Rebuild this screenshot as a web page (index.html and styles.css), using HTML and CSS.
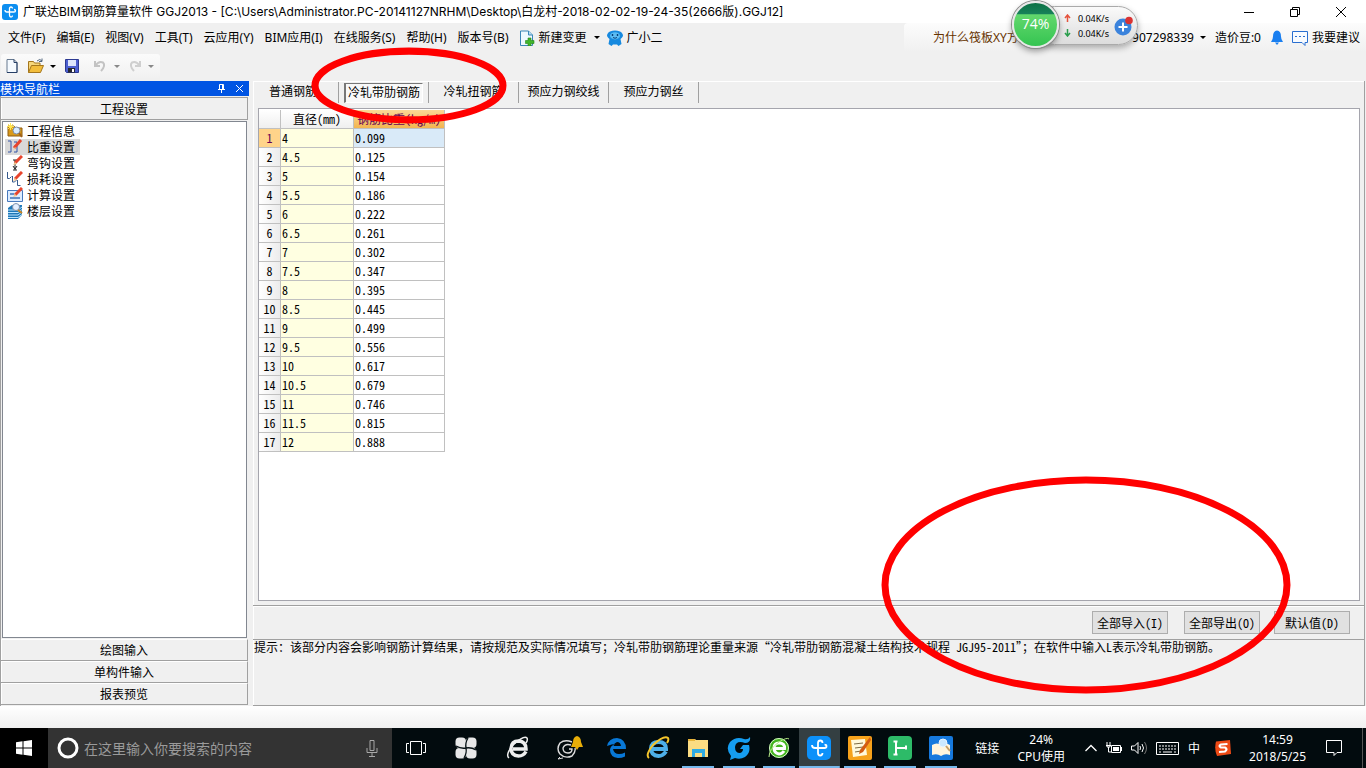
FILE: index.html
```html
<!DOCTYPE html>
<html lang="zh-CN">
<head>
<meta charset="utf-8">
<title>广联达BIM钢筋算量软件 GGJ2013</title>
<link rel="stylesheet" href="styles.css">
</head>
<body>
<div class="window">
  <header class="titlebar">
    <svg class="app-icon" viewBox="0 0 16 16"><rect width="16" height="16" rx="3" fill="#0c8ef0"/><path d="M10.500 4.500q0-1.500-1.500-1.500T7.500 4.500v6.500q0 2 1.500 2t1.500-1.500M3 6q0 2 2 2h7q1.500 0 1.500-1.200T12 5.500" fill="none" stroke="#fff" stroke-width="1.300"/></svg>
    <h1 class="title">广联达BIM钢筋算量软件 GGJ2013 - [C:\Users\Administrator.PC-20141127NRHM\Desktop\白龙村-2018-02-02-19-24-35(2666版).GGJ12]</h1>
    <div class="window-buttons">
      <button aria-label="最小化"><svg viewBox="0 0 12 12"><path d="M1 6.500h10" stroke="#000" fill="none"/></svg></button>
      <button aria-label="还原"><svg viewBox="0 0 12 12"><path d="M1.500 3.500h7v7h-7zM3.500 3.500v-2h7v7h-2" stroke="#000" fill="none"/></svg></button>
      <button aria-label="关闭"><svg viewBox="0 0 12 12"><path d="M1 1l10 10M11 1L1 11" stroke="#000" fill="none"/></svg></button>
    </div>
  </header>

  <div class="menubar">
    <nav class="menus">
      <button>文件(F)</button><button>编辑(E)</button><button>视图(V)</button><button>工具(T)</button><button>云应用(Y)</button><button>BIM应用(I)</button><button>在线服务(S)</button><button>帮助(H)</button><button>版本号(B)</button>
    </nav>
    <button class="menu-extra">
      <svg class="i16" viewBox="0 0 16 16"><path d="M1.500 1h8l4 4v10.500h-12z" fill="#eef8ff" stroke="#3b86b8"/><path d="M9.500 1v4h4" fill="#b8dcf2" stroke="#3b86b8"/><path d="M9 8h3v2.500h3v3h-3V16H9v-2.500H6.500v-3H9z" fill="#42b52b" stroke="#24831a" stroke-width=".6"/></svg>
      <span>新建变更</span><i class="caret"></i>
    </button>
    <button class="menu-extra">
      <svg class="i16" viewBox="0 0 16 16"><path d="M3 1.500Q8-.5 13 1.500q3 1.500 3 4.500-1 2-2.500 3l1 5-3 2-1.500-1.500H6L4.500 16l-3-2 1-5Q1 8 0 6q0-3 3-4.500" fill="#1689df"/><ellipse cx="8" cy="5.800" rx="5" ry="3.600" fill="#5cbcf3"/><path d="M5.500 4v2M10.500 4v2" stroke="#08417c" stroke-width="1.400"/><path d="M6 7.500q2 1.500 4 0" stroke="#08417c" fill="none"/></svg>
      <span>广小二</span>
    </button>
    <div class="account">
      <a class="question" href="#">为什么筏板XY方向</a>
      <button class="acct-id"><span>907298339</span><i class="caret"></i></button>
      <span class="beans">造价豆:0</span>
      <svg class="bell" viewBox="0 0 12 15"><path d="M6 .5q4 .5 4 6 0 3 2 5.500H0Q2 9.500 2 6.500 2 1 6 .5" fill="#1a7ff0"/><path d="M4 12.500h4L6 15z" fill="#1a7ff0"/></svg>
      <button class="suggest"><svg class="i16" viewBox="0 0 16 16"><path d="M.5 1.500h15v11H13v3l-3-3H.5z" fill="#f8fbff" stroke="#2a6fd0"/><path d="M3 6.500h2m2 0h2m2 0h2" stroke="#2a6fd0"/></svg><span>我要建议</span></button>
    </div>
  </div>

  <div class="toolrow">
    <div class="toolbar">
      <button aria-label="新建"><svg class="i16" viewBox="0 0 16 16"><path d="M3 1.500h7l3 3v10H3z" fill="#f5faff" stroke="#66788f"/><path d="M10 1.500v3h3v10H3" fill="none" stroke="#263e66"/></svg></button>
      <button class="split" aria-label="打开"><svg class="i16" viewBox="0 0 16 16"><path d="M.5 14.500v-11h5l1 1.500H12v3" fill="#f6d77c" stroke="#a4761d"/><path d="M.5 14.500l3-7H15.500l-3 7z" fill="#f2bd3c" stroke="#a4761d"/><path d="M9 3q3-3 5 0m0-2.500V3.500h-3" fill="none" stroke="#52677f"/></svg><i class="caret"></i></button>
      <button aria-label="保存"><svg class="i16" viewBox="0 0 16 16"><path d="M1.500 1.500h13v13h-12l-1-1z" fill="#4c5fd0" stroke="#2c3991"/><path d="M4 2h8v6H4z" fill="#dde5fb"/><path d="M4 10h7v4.500H4z" fill="#25272f"/><path d="M8 11h2v3H8z" fill="#fff"/></svg></button>
      <i class="divider"></i>
      <button class="split off" aria-label="撤销" disabled><svg class="i16" viewBox="0 0 16 16"><path d="M2 3v5h5M2.500 7.500Q6 2.500 10 4.500q3 3-2 8.500" fill="none" stroke="#c3c3c3" stroke-width="2"/></svg><i class="caret"></i></button>
      <button class="split off" aria-label="重做" disabled><svg class="i16" viewBox="0 0 16 16"><path d="M13 3v5H8M12.500 7.500Q9 2.500 5 4.500q-3 3 2 8.500" fill="none" stroke="#cfcfcf" stroke-width="2"/></svg><i class="caret"></i></button>
    </div>
  </div>

  <main class="workspace">
    <aside class="nav-panel">
      <div class="nav-title"><span>模块导航栏</span>
        <button aria-label="固定"><svg viewBox="0 0 9 9"><path d="M2.500 5V.5h4V5M1 5.500h7M4.500 6v3M5.500 1v4" fill="none" stroke="#fff"/></svg></button>
        <button aria-label="关闭"><svg viewBox="0 0 9 9"><path d="M1 1l7 7M8 1L1 8" fill="none" stroke="#fff"/></svg></button>
      </div>
      <button class="section">工程设置</button>
      <ul class="tree">
        <li><button><svg class="i16" viewBox="0 0 16 16"><path d="M1 3h6l1 2h7v8H1z" fill="#d99a1c" stroke="#8f5d10"/><circle cx="9.500" cy="7.500" r="3.500" fill="#d8ecff" stroke="#7b8aa0"/><path d="M12 10l3 4" stroke="#a0631c" stroke-width="2"/><path d="M3.500 0v7M0 3.500h7M1 1l5 5M6 1L1 6" stroke="#ffe552"/></svg>工程信息</button></li>
        <li class="selected"><button><svg class="i16" viewBox="0 0 16 16"><path d="M1 2h3v11H1M7 3h3v4H7M10 7v6H7" fill="none" stroke="#3455a5"/><path d="M14 1L7 9" stroke="#e8452d" stroke-width="3"/><path d="M8 8l-2 3 3-2" fill="#f4c78c"/></svg>比重设置</button></li>
        <li><button><svg class="i16" viewBox="0 0 16 16"><path d="M6 5h4M8 5v10M6 15h4M6 11l2 3 2-3" fill="none" stroke="#222"/><path d="M15 1L8 8" stroke="#e8452d" stroke-width="3"/><path d="M8 7l-2 3 4-1" fill="#f4c78c"/></svg>弯钩设置</button></li>
        <li><button><svg class="i16" viewBox="0 0 16 16"><path d="M.5 1v6.500h2l2-2M5.500 5v6h2l2-2M10.500 9v5.500h3" fill="none" stroke="#36598c"/><path d="M15 1L8 8" stroke="#e8452d" stroke-width="3"/><path d="M8 7l-2 3 4-1" fill="#f4c78c"/></svg>损耗设置</button></li>
        <li><button><svg class="i16" viewBox="0 0 16 16"><path d="M.5 3.500h15v11H.5z" fill="#dcecff" stroke="#4779bd"/><path d="M3 7h4M3 11h10" stroke="#3f73b5" stroke-width="1.500"/><path d="M15 1L8 8" stroke="#e8452d" stroke-width="3"/><path d="M8 7l-2 3 4-1" fill="#f4c78c"/></svg>计算设置</button></li>
        <li><button><svg class="i16" viewBox="0 0 16 16"><path d="M1 5l4-3h10v10l-4 4H1z" fill="#1f78b8"/><path d="M1 7h10l4-3M1 9.500h10l4-3M1 12h10l4-3M1 14.500h10l4-3" fill="none" stroke="#bce5ff"/><circle cx="9" cy="4" r="3.500" fill="#e4efff" stroke="#7f90ab"/><path d="M11 7l4 3" stroke="#c98624" stroke-width="2"/></svg>楼层设置</button></li>
      </ul>
      <button class="section">绘图输入</button>
      <button class="section">单构件输入</button>
      <button class="section">报表预览</button>
    </aside>

    <section class="content">
      <div class="tabs" role="tablist">
        <button role="tab">普通钢筋</button>
        <button role="tab" aria-selected="true" class="active"><span>冷轧带肋钢筋</span></button>
        <button role="tab">冷轧扭钢筋</button>
        <button role="tab">预应力钢绞线</button>
        <button role="tab">预应力钢丝</button>
      </div>
      <div class="sheet">
        <table class="grid">
          <thead><tr><th class="num"></th><th class="dia">直径<span class="m">(mm)</span></th><th class="wt">钢筋比重<span class="m">(kg/m)</span></th></tr></thead>
          <tbody>
            <tr class="current"><th>1</th><td>4</td><td>0.099</td></tr>
            <tr><th>2</th><td>4.5</td><td>0.125</td></tr>
            <tr><th>3</th><td>5</td><td>0.154</td></tr>
            <tr><th>4</th><td>5.5</td><td>0.186</td></tr>
            <tr><th>5</th><td>6</td><td>0.222</td></tr>
            <tr><th>6</th><td>6.5</td><td>0.261</td></tr>
            <tr><th>7</th><td>7</td><td>0.302</td></tr>
            <tr><th>8</th><td>7.5</td><td>0.347</td></tr>
            <tr><th>9</th><td>8</td><td>0.395</td></tr>
            <tr><th>10</th><td>8.5</td><td>0.445</td></tr>
            <tr><th>11</th><td>9</td><td>0.499</td></tr>
            <tr><th>12</th><td>9.5</td><td>0.556</td></tr>
            <tr><th>13</th><td>10</td><td>0.617</td></tr>
            <tr><th>14</th><td>10.5</td><td>0.679</td></tr>
            <tr><th>15</th><td>11</td><td>0.746</td></tr>
            <tr><th>16</th><td>11.5</td><td>0.815</td></tr>
            <tr><th>17</th><td>12</td><td>0.888</td></tr>
          </tbody>
        </table>
      </div>
      <div class="actions">
        <button>全部导入<span class="m">(I)</span></button>
        <button>全部导出<span class="m">(O)</span></button>
        <button class="last">默认值<span class="m">(D)</span></button>
      </div>
      <p class="hint">提示：该部分内容会影响钢筋计算结果，请按规范及实际情况填写；冷轧带肋钢筋理论重量来源“冷轧带肋钢筋混凝土结构技术规程<span class="m"> JGJ95-2011</span>”；在软件中输入<span class="m">L</span>表示冷轧带肋钢筋。</p>
    </section>
  </main>
  <div class="statusbar"></div>

  <footer class="taskbar">
    <button class="start" aria-label="开始"><svg class="i16" viewBox="0 0 16 16"><path d="M0 2.200L6.500 1.300V7.500H0zM7.500 1.200L16 0v7.500H7.500zM0 8.500h6.500v6.200L0 13.800zM7.500 8.500H16V16l-8.500-1.200z" fill="#fff"/></svg></button>
    <label class="search">
      <svg class="ring" viewBox="0 0 22 22"><circle cx="11" cy="11" r="9" fill="none" stroke="#fff" stroke-width="3"/></svg>
      <input type="text" placeholder="在这里输入你要搜索的内容" aria-label="搜索">
      <svg class="mic" viewBox="0 0 12 17"><path d="M4 .5h4v10H4zM1 8v4.500h10V8M6 13v3.500M3 16.500h6" fill="none" stroke="#a8a8a8"/></svg>
    </label>
    <button class="slot" aria-label="任务视图"><svg viewBox="0 0 20 14" width="20" height="14"><path d="M4.500.5h11v13h-11zM3 2.500H.5v9H3M17 2.500h2.500v9H17" fill="none" stroke="#fff"/></svg></button>
    <button class="slot wide" aria-label="风扇"><svg viewBox="0 0 22 22" width="22" height="22"><g fill="#e8e8e8"><rect x=".5" y=".5" width="10.500" height="10.500" rx="4"/><rect x="11" y=".5" width="10.500" height="10.500" rx="4"/><rect x=".5" y="11" width="10.500" height="10.500" rx="4"/><rect x="11" y="11" width="10.500" height="10.500" rx="4"/><path d="M6 6h10v10H6z"/></g><path d="M11 11Q6 12 1 9M11 11q-1-5 2-10M11 11q5-1 10 2M11 11q1 5-2 10" stroke="#051013" stroke-width="1.300" fill="none"/></svg></button>
    <button class="slot wide" aria-label="浏览器"><svg viewBox="0 0 24 24" width="24" height="24"><path d="M20 15.500Q17.500 20 12.500 20 5 19.500 5 12.500 5.500 5 12.500 5 20 5.500 20 13H7" fill="none" stroke="#eee" stroke-width="3.500"/><path d="M3 22Q-1 19 7 9 18-1 21 2q1 2-1 5" fill="none" stroke="#eee" stroke-width="1.500"/></svg></button>
    <button class="slot wide" aria-label="提醒"><svg viewBox="0 0 28 26" width="28" height="26"><path d="M16 7Q9 4 4 8q-4 6 0 11 5 5 12 2 4-4 3-8M15 10q-6-2-8 3 0 5 5 5 4 0 4-4h-3" fill="none" stroke="#ddd" stroke-width="1.400"/><path d="M4 22l-2 2 5-1" fill="none" stroke="#ddd"/><path d="M21 1q4 1 4 6l2 5H15l2-5q0-5 4-6M19 12h4l-2 3z" fill="#e8ae08"/></svg></button>
    <div class="apps">
      <button aria-label="Edge"><svg viewBox="0 0 22 22" width="22" height="22"><path d="M1 9Q3 1 11 1q9 1 9 11H7q1 5 6 5 3 0 6-1.500v4Q16 21 12 21 4 20 4 13q0-4 5-6-3 0-8 2M7.500 9H15q-.5-4-4-4-3 1-3.500 4" fill="#0878d7"/></svg></button>
      <button aria-label="Internet Explorer"><svg viewBox="0 0 24 24" width="24" height="24"><path d="M20 15.500Q17 20 12.500 20 5 19.500 5 12.500 5.500 6 12.500 6 20 6 20 13H7" fill="none" stroke="#4dafe9" stroke-width="4"/><path d="M3 22Q-1 19 7 9 18-1 22 2q1 2-1 5" fill="none" stroke="#f5c52b" stroke-width="2"/></svg></button>
      <button class="open" aria-label="文件资源管理器"><svg viewBox="0 0 22 20" width="22" height="20"><path d="M1 1h7l1 1h12v17H1z" fill="#fbdc82"/><path d="M1 1h7v2H1z" fill="#e9b53a"/><path d="M5 11h13v8h-3v-4H8v4H5z" fill="#2fabe2"/></svg></button>
      <button class="open" aria-label="G浏览器"><svg viewBox="0 0 24 24" width="24" height="24"><path d="M23 1q1 6-5 6Q9 4 8 11q0 6 5 6 3-1 3-4h-3l3-4h6q2 8-4 12-5 3-10 1l-5 2 1-4Q-2 13 3 6 9 0 17 3q4 1 6-2" fill="#159df0"/></svg></button>
      <button class="open" aria-label="360浏览器"><svg viewBox="0 0 24 24" width="24" height="24"><circle cx="12" cy="12" r="10" fill="#43b51f"/><circle cx="12" cy="12" r="9.500" fill="none" stroke="#d7f4c8"/><path d="M17 15q-2 3-5 3-5-1-5-6 0-5 5-5 6 0 5.500 5.500H8" fill="none" stroke="#fff" stroke-width="3"/><path d="M2 21Q2 13 12 6q8-5 10-3" fill="none" stroke="#b9ee89"/></svg></button>
      <button class="open active" aria-label="广联达"><svg viewBox="0 0 24 24" width="24" height="24"><rect width="24" height="24" rx="5" fill="#0c91fa"/><path d="M15.500 7q0-2.500-2.200-2.500T11 7v10q0 2.500 2.200 2.500T15.500 17M5 9q0 3 3 3h9.500q2 0 2-1.700t-2-1.700" fill="none" stroke="#fff" stroke-width="1.800"/></svg></button>
      <button class="open" aria-label="便笺"><svg viewBox="0 0 24 24" width="24" height="24"><rect width="24" height="24" rx="2" fill="#f6a21b"/><path d="M3 4l14-1 2 16-14 2z" fill="#fff9dc"/><path d="M6 8l9-1M7 12l8-1M7 16l6-1" stroke="#7c6b45"/><path d="M22 1L12 14l-1 4 4-2L23 4z" fill="#d35c12"/></svg></button>
      <button class="open" aria-label="钢筋"><svg viewBox="0 0 24 24" width="24" height="24"><rect width="24" height="24" rx="4" fill="#2dbb68"/><path d="M5.500 5.500h4M8 5.500v13M5.500 18.500h4M8 12h10M18 9.500v4" fill="none" stroke="#fff" stroke-width="2"/></svg></button>
      <button class="open" aria-label="词典"><svg viewBox="0 0 24 24" width="24" height="24"><rect width="24" height="24" rx="2" fill="#1679dd"/><path d="M3 9q5-3 9 0 5-3 9 0v10q-5-2-9 1-4-3-9-1z" fill="#fff5dd"/><circle cx="14" cy="7" r="4" fill="#cbe8ff" stroke="#eaf5ff"/><path d="M17 10l4 5" stroke="#c49e68" stroke-width="2"/></svg></button>
    </div>
    <div class="tray">
      <span class="links">链接</span>
      <span class="cpu">24%<br>CPU使用</span>
      <div class="tray-icons">
        <svg viewBox="0 0 12 8" width="12" height="8"><path d="M.5 7L6 1.500 11.500 7" fill="none" stroke="#fff" stroke-width="1.300"/></svg>
        <svg viewBox="0 0 16 12" width="16" height="12"><path d="M5.500 3.500h9v7h-9z" fill="none" stroke="#fff"/><path d="M7 5h6v4H7zM15 5h1v4h-1z" fill="#fff"/><path d="M1 0v3M4 0v3M0 3.500h5M1 3v2h3V3M2.500 5v5H5" fill="none" stroke="#fff"/></svg>
        <svg viewBox="0 0 16 14" width="16" height="14"><path d="M.5 5h3L7 1.500v11L3.500 9h-3zM9 5q1 2 0 4M11 3q3 4 0 8" fill="none" stroke="#fff"/><path d="M13.500 1q4 6 0 12" fill="none" stroke="#777"/></svg>
        <svg viewBox="0 0 23 13" width="23" height="13"><path d="M.5.5h22v12H.5z" fill="none" stroke="#fff"/><path d="M3 4h17M3 7h17" stroke="#fff" stroke-dasharray="2 1"/><path d="M3 10h2m2 0h9m2 0h2" stroke="#fff"/></svg>
        <span class="ime">中</span>
        <svg viewBox="0 0 16 16" width="16" height="16"><path d="M1 1.500L15 0l1 14L2 16Q-1 9 1 1.500" fill="#ed4a15"/><path d="M12.500 4L6 4.500q-3 1.500 0 3h4q3 1.500 0 4L4 12" fill="none" stroke="#fff" stroke-width="2.200"/></svg>
      </div>
      <time class="clock">14:59<br>2018/5/25</time>
      <button class="notify" aria-label="通知"><svg viewBox="0 0 16 16" width="16" height="16"><path d="M.5.500h15v12H11l-3 3v-3H.5z" fill="none" stroke="#fff"/></svg></button>
    </div>
  </footer>

  <div class="meter">
    <div class="rates">
      <span><svg viewBox="0 0 7 8"><path d="M3.500 8V1.500M1 4l2.500-3L6 4" fill="none" stroke="#e5533d" stroke-width="1.500"/></svg>0.04K/s</span>
      <span><svg viewBox="0 0 7 8"><path d="M3.500 0v6.500M1 4l2.500 3L6 4" fill="none" stroke="#2a9d4c" stroke-width="1.500"/></svg>0.04K/s</span>
    </div>
    <svg class="plus" viewBox="0 0 20 20"><circle cx="9" cy="11" r="8.500" fill="#3b83dc"/><path d="M9 6.500v9M4.500 11h9" stroke="#fff" stroke-width="2"/><circle cx="15" cy="4.500" r="3.800" fill="#d93333"/></svg>
    <div class="ball">74%</div>
  </div>
  <svg class="mark mark-tab" viewBox="0 0 194 76"><ellipse cx="97" cy="38" rx="93" ry="34" fill="none" stroke="#f00" stroke-width="7"/></svg>
  <svg class="mark mark-actions" viewBox="0 0 410 218"><ellipse cx="205" cy="109" rx="201" ry="105" fill="none" stroke="#f00" stroke-width="7"/></svg>
</div>
</body>
</html>
```

FILE: styles.css
```css
* { box-sizing: border-box; }
body {
  margin: 0;
  background: #f0f0f0;
  color: #000;
  font: 12px/16px "Noto Sans CJK SC", sans-serif;
}
button { margin: 0; padding: 0; border: 0; background: none; color: inherit; font: inherit; white-space: nowrap; }
svg { display: block; flex: none; }
.i16 { width: 16px; height: 16px; }
.m { font-feature-settings: "hwid"; white-space: pre-wrap; }
.caret { border: 3px solid transparent; border-top-color: #000; border-bottom: 0; }

.window { position: relative; display: flex; flex-direction: column; min-height: 100vh; overflow: hidden; }

.titlebar { display: flex; align-items: center; height: 23px; padding-left: 2px; background: #fff; }
.app-icon { width: 16px; height: 16px; }
.title { flex: 1; margin: 0 0 0 5px; font: 12px/16px Inter, "Noto Sans CJK SC", sans-serif; white-space: nowrap; }
.window-buttons { display: flex; padding-right: 2px; }
.window-buttons button { display: grid; place-items: center; width: 46px; height: 20px; }
.window-buttons svg { width: 12px; height: 12px; }

.menubar { display: flex; align-items: center; height: 29px; padding-left: 8px; font-family: "Noto Sans", "Noto Sans CJK SC", sans-serif; }
.menus { display: flex; gap: 11px; margin-right: 10px; }
.menu-extra { display: flex; align-items: center; gap: 4px; margin-right: 7px; }
.menu-extra .caret { margin-left: 3px; }
.account {
  display: flex; align-items: center; justify-content: flex-end; flex: 0 0 462px;
  height: 100%; margin-left: auto; padding-right: 6px;
  background: linear-gradient(#fcfcfc, #f0f0f0); border-radius: 4px 0 0 4px;
}
.question { margin-right: auto; padding-left: 29px; color: #663300; text-decoration: none; }
.acct-id { display: flex; align-items: center; gap: 6px; margin-right: 9px; }
.beans { margin-right: 10px; }
.bell { width: 12px; height: 15px; margin-right: 9px; }
.suggest { display: flex; align-items: center; gap: 4px; }

.toolrow { display: flex; height: 29px; padding: 2px 0 3px 1px; }
.toolbar { display: flex; align-items: center; width: 159px; padding-left: 3px; background: linear-gradient(#fbfbfb, #f1f1f1); border-radius: 3px; }
.toolbar button { margin-right: 8px; }
.toolbar .split { display: flex; align-items: center; gap: 6px; }
.toolbar .off { gap: 5px; margin-right: 7px; }
.off .caret { border-top-color: #888; }
.divider { width: 1px; height: 22px; margin-right: 5px; background: #a0a0a0; }

.workspace { display: flex; flex: 1; gap: 4px; padding-right: 1px; }
.nav-panel { display: flex; flex-direction: column; width: 249px; padding: 0 1px 1px 0; border-left: 1px solid #a0a0a0; }
.nav-title { display: flex; align-items: center; height: 15px; margin: 0 -1px; background: #0054e3; color: #fff; }
.nav-title span { flex: 1; }
.nav-title button { width: 9px; height: 9px; margin-right: 9px; }
.nav-title button:last-child { margin-right: 5px; }
.section { flex: none; height: 22px; border: 1px solid #a0a0a0; border-left: 0; border-top-color: #fff; box-shadow: inset 1px 0 #fff; }
.nav-title + .section { height: 23px; margin-top: 1px; border-top-color: #a0a0a0; }
.tree { flex: 1; margin: 1px 1px 1px; padding: 1px 0 0 2px; border: 1px solid #828790; background: #fff; list-style: none; }
.tree li { width: 75px; height: 16px; }
.tree .selected { background: #d9d9d9; }
.tree button { display: flex; align-items: center; gap: 4px; padding-left: 2px; }

.content { display: flex; flex: 1; flex-direction: column; min-width: 0; border: 1px solid #a0a0a0; border-width: 0 1px 1px 0; box-shadow: inset 1px 1px #fff; }
.tabs { display: flex; height: 27px; padding-top: 1px; }
.tabs button { width: 90px; height: 21px; padding-bottom: 4px; border-right: 1px solid #a0a0a0; }
.tabs button:first-child { width: 86px; padding-right: 5px; }
.tabs .active { padding: 0 5px; }
.active span { display: block; height: 20px; border: 1px solid #fff; border-top: 1px solid #777; border-left: 2px solid #777; background: #f8f8f8; }
.sheet { flex: 1; margin: 0 4px 4px 5px; border: 1px solid #a5a5ad; background: #fff; }
.grid { table-layout: fixed; width: 186px; border-collapse: separate; border-spacing: 0; margin-top: 1px; }
.grid th, .grid td {
  height: 19px; padding: 0 2px; border: 1px solid #c0c0c0; border-width: 0 1px 1px 0;
  font: 12px/16px "Noto Sans CJK SC", sans-serif; font-feature-settings: "hwid";
}
.grid td { padding: 0 1px; text-align: left; }
.grid tbody th { padding: 0; background: linear-gradient(90deg, #fff, #ececec); text-align: center; }
.grid thead th { padding: 0; background: linear-gradient(#fff, #efefef); white-space: nowrap; overflow: hidden; }
.grid .num { width: 22px; }
.grid .dia { width: 73px; }
.grid thead .wt { background: linear-gradient(#fbd896, #f3b550); color: #660055; }
.grid td:nth-child(2) { background: #ffffe1; }
.grid tbody .current th { background: #ffd48a; color: #660055; }
.grid .current td:last-child { background: #d9eaf8; }
.actions { display: flex; justify-content: flex-end; gap: 16px; height: 34px; padding: 5px 14px 0 0; border-top: 1px solid #a0a0a0; box-shadow: inset 0 1px #fff; }
.actions button { width: 76px; height: 23px; border: 1px solid #adadad; background: #e1e1e1; }
.actions .last { margin-left: -2px; }
.hint { height: 66px; margin: 0; padding-left: 1px; border-top: 1px solid #a0a0a0; line-height: 14px; white-space: nowrap; }
.statusbar { height: 22px; background: linear-gradient(#fff, #f0f0f0); }

.taskbar { display: flex; height: 40px; background: #020b0e; color: #fff; }
.start { display: grid; place-items: center; width: 48px; background: #000; }
.search { display: flex; align-items: center; width: 344px; padding: 0 14px 0 9px; background: #333; }
.ring { width: 22px; height: 22px; }
.search input { flex: 1; min-width: 0; margin: 0 0 0 5px; padding: 0; border: 0; outline: 0; background: none; color: #fff; font: 14px/20px "Noto Sans CJK SC", sans-serif; }
.search input::placeholder { color: #9a9a9a; opacity: 1; }
.mic { width: 12px; height: 17px; }
.slot { display: grid; place-items: center; width: 48px; }
.wide { width: 52px; }
.apps { display: grid; grid-template-columns: repeat(9, 1fr); width: 364px; margin-left: 1px; }
.apps button { display: grid; place-items: center; }
.apps .open { background: linear-gradient(#76b9ed, #76b9ed) center bottom / 32px 2px no-repeat; }
.apps .active { background: linear-gradient(#76b9ed, #76b9ed) center bottom / 100% 2px no-repeat #343f42; }
.tray { display: flex; align-items: center; margin-left: auto; padding-right: 3px; font: 12px/17px "Noto Sans", "Noto Sans CJK SC", sans-serif; }
.links { margin-right: 18px; }
.cpu { margin-right: 20px; text-align: center; }
.tray-icons { display: flex; align-items: center; gap: 9px; margin-right: 18px; }
.ime { margin-right: 6px; }
.clock { margin-right: 20px; text-align: center; }
.notify { padding-right: 20px; border-right: 1px solid #555; height: 40px; }

.meter {
  position: absolute; top: 6px; left: 1035px; width: 103px; height: 39px;
  display: flex; align-items: center; justify-content: flex-end; gap: 5px; padding-right: 3px;
  border: 1px solid #aaa; border-radius: 20px; background: linear-gradient(#fafafa, #dcdcdc);
  box-shadow: 0 3px 6px rgba(0, 0, 0, .3);
}
.rates { display: flex; flex-direction: column; font: 9px/15px "Noto Sans", sans-serif; }
.rates span { display: flex; align-items: center; gap: 7px; }
.rates svg { width: 7px; height: 8px; }
.plus { width: 20px; height: 20px; }
.ball {
  position: absolute; top: -6px; left: -24px; width: 47px; height: 47px;
  border: 2px solid #e8e8e8; border-radius: 50%;
  background: linear-gradient(#0c7145, #18825a 26%, #62d86d 27%, #35c451);
  box-shadow: 0 0 0 1px #8a8a8a, 0 3px 6px rgba(0, 0, 0, .4);
  color: #fff; font: 14px/41px "Open Sans", sans-serif; text-align: center;
}
.mark { position: absolute; pointer-events: none; }
.mark-tab { top: 47px; left: 311px; width: 196px; height: 77px; }
.mark-actions { top: 476px; left: 880px; width: 412px; height: 218px; }
```
